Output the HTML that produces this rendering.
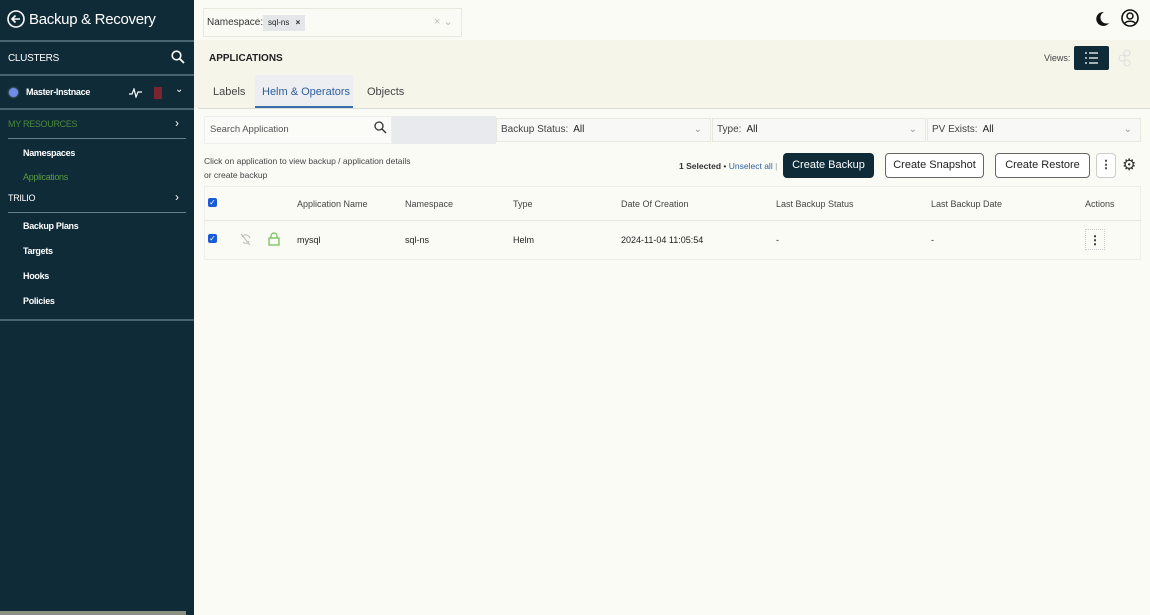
<!DOCTYPE html>
<html><head><meta charset="utf-8"><style>
*{box-sizing:border-box;margin:0;padding:0}
body{width:1150px;height:615px;overflow:hidden;font-family:"Liberation Sans",sans-serif;background:#fbfbf5;position:relative;color:#222}
.sb{position:absolute;left:0;top:0;width:194px;height:615px;background:#0f2b38;color:#fff}
.sb .t{position:absolute;font-size:12px;font-weight:bold;letter-spacing:-.3px}
.hr{position:absolute;left:0;width:194px;height:2px;background:#4a6370}
.main{position:absolute;left:194px;top:0;right:0;bottom:0}
.abs{position:absolute}
.btn{position:absolute;top:153px;height:25px;border:1px solid #666;border-radius:4px;font-size:11px;text-align:center;line-height:23px;background:#fff}
.th{position:absolute;top:199px;font-size:9px;color:#444}
.td{position:absolute;top:235px;font-size:9px;color:#222}
.cb{position:absolute;width:9px;height:9px;background:#1a5cd6;border-radius:2px;color:#fff;font-size:8px;line-height:9px;text-align:center}
.sel{position:absolute;top:118px;height:24px;background:#f8f8f6;border:1px solid #e8e8e0;font-size:10px;line-height:22px;padding-left:4px;color:#444}
.sel b{font-weight:normal;color:#222;margin-left:5px}
.chev{position:absolute;right:8px;top:0;color:#999;font-size:10px}
</style></head><body>
<div class="sb">
  <svg class="abs" style="left:7px;top:10px" width="18" height="18" viewBox="0 0 18 18"><circle cx="9" cy="9" r="8" fill="none" stroke="#fff" stroke-width="1.6"/><path d="M13 9H5M8.5 5.5L5 9l3.5 3.5" fill="none" stroke="#fff" stroke-width="1.6"/></svg>
  <div class="t" style="left:29px;top:11px;font-size:15px;font-weight:normal">Backup &amp; Recovery</div>
  <div class="hr" style="top:40px"></div>
  <div class="t" style="left:8px;top:53px;font-size:10px;font-weight:normal">CLUSTERS</div>
  <svg class="abs" style="left:171px;top:50px" width="14" height="14" viewBox="0 0 14 14"><circle cx="5.5" cy="5.5" r="4.3" fill="none" stroke="#fff" stroke-width="1.6"/><path d="M8.7 8.7L13 13" stroke="#fff" stroke-width="1.8"/></svg>
  <div class="hr" style="top:74px"></div>
  <div class="abs" style="left:9px;top:88px;width:9px;height:9px;border-radius:50%;background:#6d8de8;box-shadow:0 0 2px #aac"></div>
  <div class="t" style="left:26px;top:87px;font-size:9px">Master-Instnace</div>
  <svg class="abs" style="left:129px;top:88px" width="13" height="10" viewBox="0 0 13 10"><path d="M0 6h3l2-5 2 8 2-5h4" fill="none" stroke="#fff" stroke-width="1.2"/></svg>
  <div class="abs" style="left:154px;top:87px;width:8px;height:12px;background:#7a2430"></div>
  <div class="abs" style="left:175px;top:84px;font-size:10px">⌄</div>
  <div class="hr" style="top:108px"></div>
  <div class="t" style="left:8px;top:119px;font-size:9px;font-weight:normal;color:#4c8a3a">MY RESOURCES</div>
  <div class="abs" style="left:175px;top:116px;font-size:12px">›</div>
  <div class="abs" style="left:8px;top:138px;width:178px;height:1px;background:#687e88"></div>
  <div class="t" style="left:23px;top:148px;font-size:9px">Namespaces</div>
  <div class="t" style="left:23px;top:172px;font-size:9px;color:#5a9a40;font-weight:normal">Applications</div>
  <div class="t" style="left:8px;top:193px;font-size:9px;font-weight:normal">TRILIO</div>
  <div class="abs" style="left:175px;top:190px;font-size:12px">›</div>
  <div class="abs" style="left:8px;top:212px;width:178px;height:1px;background:#687e88"></div>
  <div class="t" style="left:23px;top:221px;font-size:9px">Backup Plans</div>
  <div class="t" style="left:23px;top:246px;font-size:9px">Targets</div>
  <div class="t" style="left:23px;top:271px;font-size:9px">Hooks</div>
  <div class="t" style="left:23px;top:296px;font-size:9px">Policies</div>
  <div class="hr" style="top:319px"></div>
  <div class="abs" style="left:0;top:611px;width:186px;height:4px;background:#8d8f80"></div>
</div>
<div class="main">
  <div class="abs" style="left:9px;top:8px;width:259px;height:29px;border:1px solid #e8e8dc;background:#fbfbf5"></div>
  <div class="abs" style="left:13px;top:17px;font-size:10px;color:#333">Namespace:</div>
  <div class="abs" style="left:69px;top:15px;width:42px;height:16px;background:#e4e6ea;font-size:8px;line-height:16px;padding-left:5px">sql-ns <b style="margin-left:4px">×</b></div>
  <div class="abs" style="left:240px;top:15px;font-size:11px;color:#bbb">× ⌄</div>
  <svg class="abs" style="left:900px;top:11px" width="16" height="16" viewBox="0 0 16 16"><path d="M10 1a7 7 0 1 0 5 11A6 6 0 0 1 10 1z" fill="#111"/></svg>
  <svg class="abs" style="left:927px;top:9px" width="18" height="18" viewBox="0 0 18 18"><circle cx="9" cy="9" r="8" fill="none" stroke="#111" stroke-width="1.6"/><circle cx="9" cy="7" r="3" fill="none" stroke="#111" stroke-width="1.5"/><path d="M3.5 14.5c2-3 9-3 11 0" fill="none" stroke="#111" stroke-width="1.5"/></svg>
  <div class="abs" style="left:0;top:40px;width:956px;height:68px;background:#f5f5ea"></div>
  <div class="abs" style="left:15px;top:53px;font-size:10px;font-weight:bold">APPLICATIONS</div>
  <div class="abs" style="left:850px;top:53px;font-size:9px;color:#444">Views:</div>
  <div class="abs" style="left:880px;top:46px;width:35px;height:24px;background:#0f2b38;border-radius:2px"></div>
  <svg class="abs" style="left:891px;top:52px" width="13" height="12" viewBox="0 0 13 12"><path d="M0 1h2M4 1h9M0 6h2M4 6h9M0 11h2M4 11h9" stroke="#fff" stroke-width="1.3"/></svg>
  <svg class="abs" style="left:924px;top:49px" width="14" height="18" viewBox="0 0 14 18"><circle cx="9" cy="4" r="3" fill="none" stroke="#ddd"/><circle cx="4" cy="9" r="3" fill="none" stroke="#ddd"/><circle cx="9" cy="14" r="3" fill="none" stroke="#ddd"/></svg>
  <div class="abs" style="left:61px;top:75px;width:98px;height:33px;background:#eceef2;border-bottom:2px solid #3a6ea8"></div>
  <div class="abs" style="left:19px;top:86px;font-size:11px;color:#444">Labels</div>
  <div class="abs" style="left:68px;top:86px;font-size:11px;color:#2f5e9a">Helm &amp; Operators</div>
  <div class="abs" style="left:173px;top:86px;font-size:11px;color:#444">Objects</div>
  <div class="abs" style="left:4px;top:108px;width:952px;height:1px;background:#ddd"></div>
  <div class="abs" style="left:10px;top:116px;width:188px;height:28px;background:#fbfbf8;border:1px solid #eee"></div>
  <div class="abs" style="left:16px;top:124px;font-size:9.5px;color:#555">Search Application</div>
  <svg class="abs" style="left:180px;top:121px" width="13" height="13" viewBox="0 0 13 13"><circle cx="5" cy="5" r="4" fill="none" stroke="#333" stroke-width="1.3"/><path d="M8 8l4 4" stroke="#333" stroke-width="1.4"/></svg>
  <div class="abs" style="left:198px;top:116px;width:104px;height:28px;background:#e8eaee"></div>
  <div class="sel" style="left:302px;width:215px">Backup Status:<b>All</b><span class="chev">⌄</span></div>
  <div class="sel" style="left:518px;width:214px">Type:<b>All</b><span class="chev">⌄</span></div>
  <div class="sel" style="left:733px;width:214px">PV Exists:<b>All</b><span class="chev">⌄</span></div>
  <div class="abs" style="left:10px;top:154px;font-size:8.5px;color:#444;line-height:14px">Click on application to view backup / application details<br>or create backup</div>
  <div class="abs" style="left:485px;top:161px;font-size:8.5px;color:#333"><b>1 Selected</b> • <span style="color:#2f5e9a">Unselect all</span> <span style="color:#999">|</span></div>
  <div class="btn" style="left:589px;width:91px;background:#0f2b38;color:#fff;border-color:#0f2b38">Create Backup</div>
  <div class="btn" style="left:691px;width:99px">Create Snapshot</div>
  <div class="btn" style="left:801px;width:95px">Create Restore</div>
  <div class="btn" style="left:902px;width:20px;border-color:#ccc;font-weight:bold;line-height:22px">⋮</div>
  <div class="abs" style="left:928px;top:155px;font-size:16px;color:#333">⚙</div>
  <div class="abs" style="left:10px;top:186px;width:937px;height:74px;border:1px solid #eee"></div>
  <div class="abs" style="left:10px;top:220px;width:937px;height:1px;background:#e8e8e0"></div>
  <div class="cb" style="left:14px;top:198px">✓</div>
  <div class="th" style="left:103px">Application Name</div>
  <div class="th" style="left:211px">Namespace</div>
  <div class="th" style="left:319px">Type</div>
  <div class="th" style="left:427px">Date Of Creation</div>
  <div class="th" style="left:582px">Last Backup Status</div>
  <div class="th" style="left:737px">Last Backup Date</div>
  <div class="th" style="left:891px">Actions</div>
  <div class="cb" style="left:14px;top:234px">✓</div>
  <svg class="abs" style="left:46px;top:233px" width="11" height="13" viewBox="0 0 11 13"><path d="M1 1l9 11M2 4c2-3 6-3 8 1M3 9c2 2 5 2 6-1" fill="none" stroke="#bbb" stroke-width="1"/></svg>
  <svg class="abs" style="left:74px;top:232px" width="12" height="14" viewBox="0 0 12 14"><path d="M3 6V4a3 3 0 0 1 6 0v2" fill="none" stroke="#6cbf50" stroke-width="1.2"/><rect x="1" y="6" width="10" height="7" fill="none" stroke="#6cbf50" stroke-width="1.2"/></svg>
  <div class="td" style="left:103px">mysql</div>
  <div class="td" style="left:211px">sql-ns</div>
  <div class="td" style="left:319px">Helm</div>
  <div class="td" style="left:427px">2024-11-04 11:05:54</div>
  <div class="td" style="left:582px">-</div>
  <div class="td" style="left:737px">-</div>
  <div class="abs" style="left:891px;top:229px;width:20px;height:21px;border:1px dotted #ccc;text-align:center;font-size:12px;line-height:20px;font-weight:bold">⋮</div>
</div>
</body></html>
